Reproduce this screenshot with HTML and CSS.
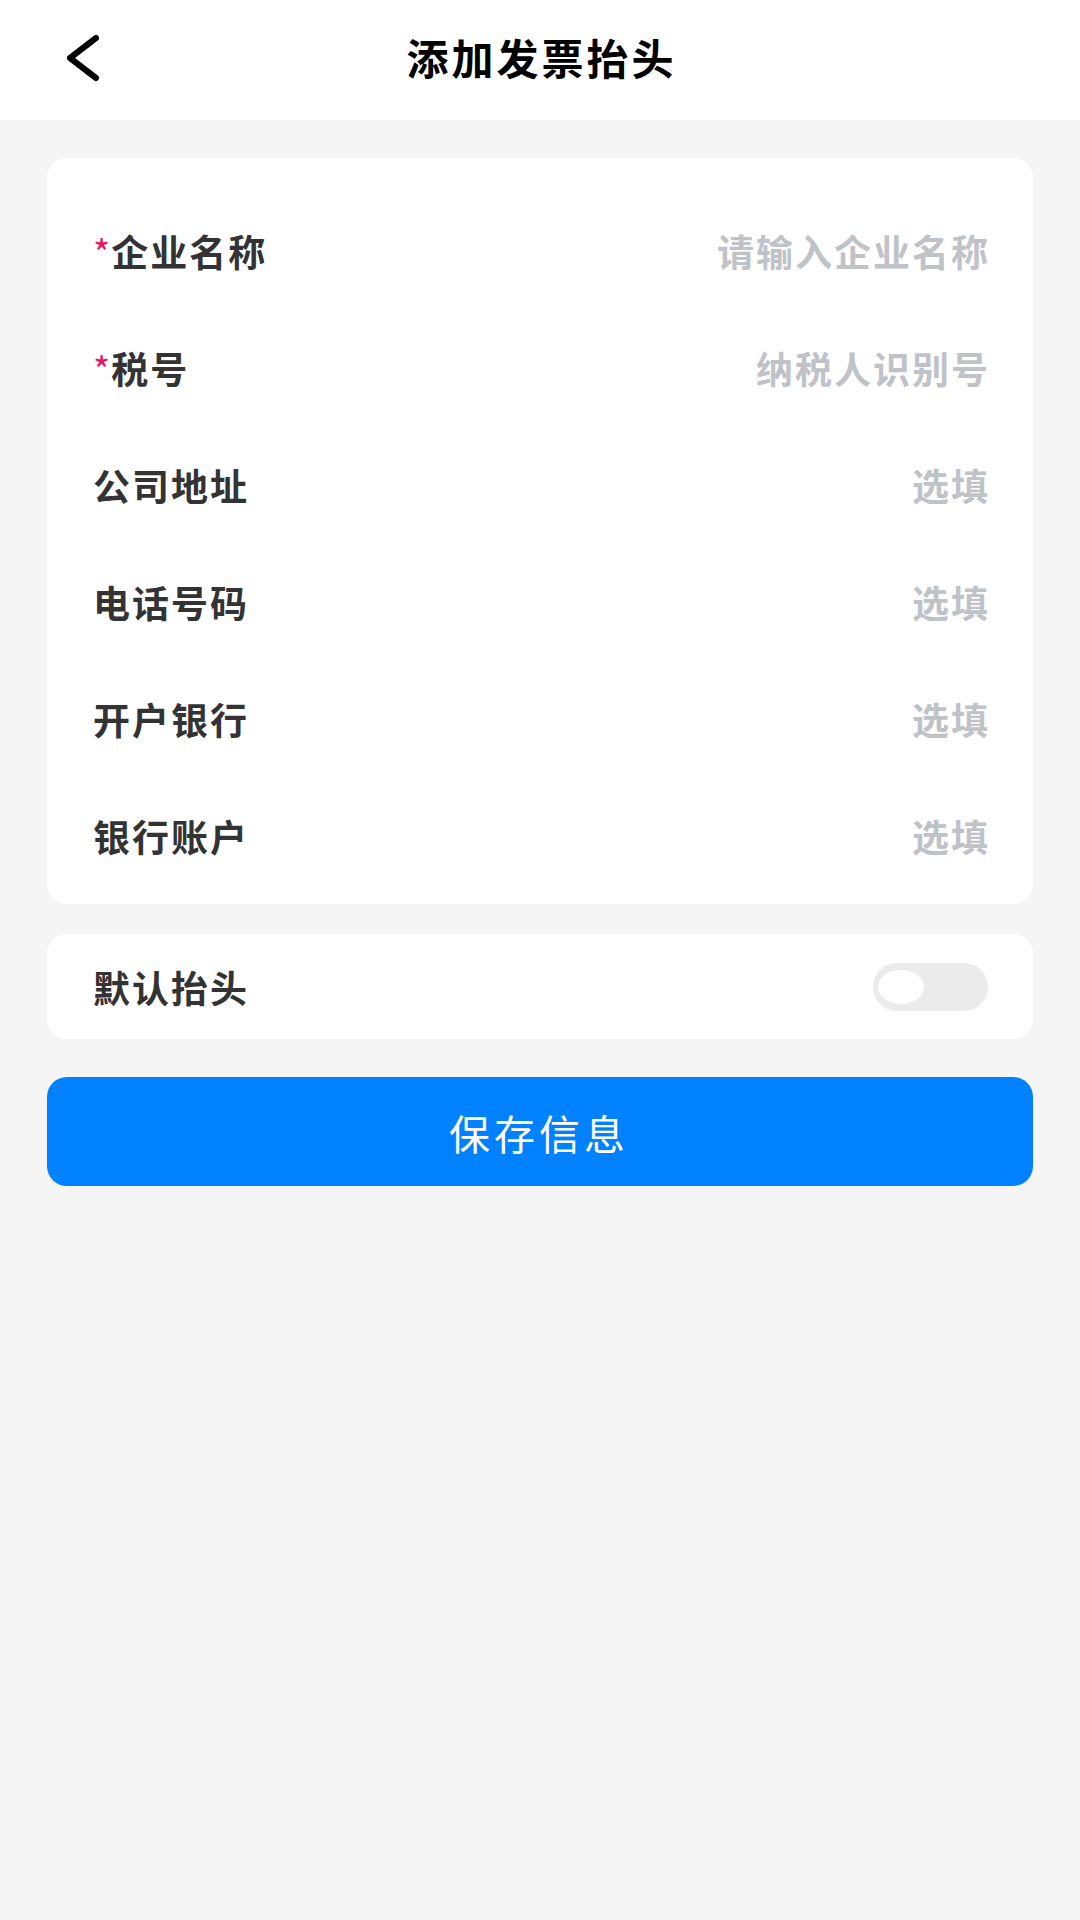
FILE: index.html
```html
<!DOCTYPE html>
<html lang="zh-CN">
<head>
  <meta charset="UTF-8">
  <meta name="viewport" content="width=device-width, initial-scale=1.0">
  <title>添加发票抬头</title>
  <link rel="stylesheet" href="styles.css">
</head>
<body>
  <div class="nav">
    <a class="back" href="#">
      <svg width="40" height="50" viewBox="0 0 40 50">
        <polyline points="31,5 5,25 31,45" fill="none" stroke="#000" stroke-width="6" stroke-linecap="round" stroke-linejoin="round"/>
      </svg>
    </a>
    <h1>添加发票抬头</h1>
  </div>

  <div class="page">
    <div class="card form-card">
      <div class="row">
        <label><span class="req">*</span>企业名称</label>
        <input type="text" placeholder="请输入企业名称">
      </div>
      <div class="row">
        <label><span class="req">*</span>税号</label>
        <input type="text" placeholder="纳税人识别号">
      </div>
      <div class="row">
        <label>公司地址</label>
        <input type="text" placeholder="选填">
      </div>
      <div class="row">
        <label>电话号码</label>
        <input type="text" placeholder="选填">
      </div>
      <div class="row">
        <label>开户银行</label>
        <input type="text" placeholder="选填">
      </div>
      <div class="row">
        <label>银行账户</label>
        <input type="text" placeholder="选填">
      </div>
    </div>

    <div class="card switch-card">
      <label>默认抬头</label>
      <span class="switch"><span class="knob"></span></span>
    </div>

    <button class="save">保存信息</button>
  </div>
</body>
</html>
```

FILE: styles.css
```css
html, body {
  margin: 0;
  padding: 0;
}
body {
  font-family: "Noto Sans CJK SC", "Noto Sans", sans-serif;
  background-color: #f5f5f5;
  min-height: 1920px;
  color: #333;
}
.nav {
  height: 120px;
  background-color: #fff;
  display: flex;
  align-items: center;
  justify-content: center;
  position: relative;
}
.back {
  position: absolute;
  left: 65px;
  top: 33px;
  display: block;
  line-height: 0;
}
.nav h1 {
  margin: 0;
  font-size: 42px;
  font-weight: bold;
  letter-spacing: 3px;
  color: #000;
  padding-left: 3px;
  margin-top: -8px;
}
.page {
  padding: 38px 47px 0;
}
.card {
  background-color: #fff;
  border-radius: 20px;
}
.form-card {
  padding: 34px 45px 10px 46px;
}
.row {
  height: 117px;
  display: flex;
  align-items: center;
  justify-content: space-between;
}
label {
  font-size: 37px;
  font-weight: bold;
  letter-spacing: 2px;
  color: #333;
  white-space: nowrap;
}
.req {
  color: #e8175d;
  font-weight: normal;
  letter-spacing: 0;
  margin-right: 1px;
}
input {
  flex: 1;
  min-width: 0;
  border: none;
  outline: none;
  background: transparent;
  text-align: right;
  font-family: inherit;
  font-size: 37px;
  font-weight: bold;
  letter-spacing: 2px;
  color: #333;
  padding: 0;
  margin-right: -2px;
}
input::placeholder {
  color: #bfc2c7;
}
.switch-card {
  margin-top: 30px;
  height: 105px;
  padding: 0 45px 0 46px;
  display: flex;
  align-items: center;
  justify-content: space-between;
}
.switch {
  width: 115px;
  height: 48px;
  border-radius: 24px;
  background-color: #ebebeb;
  display: flex;
  align-items: center;
  padding-left: 5px;
  box-sizing: border-box;
}
.knob {
  width: 46px;
  height: 34px;
  border-radius: 50%;
  background-color: #fff;
}
.save {
  margin-top: 38px;
  width: 100%;
  height: 109px;
  border: none;
  border-radius: 20px;
  background-color: #0081ff;
  color: #fff;
  font-family: inherit;
  font-size: 41px;
  letter-spacing: 4px;
  padding-left: 4px;
  cursor: pointer;
}
```
